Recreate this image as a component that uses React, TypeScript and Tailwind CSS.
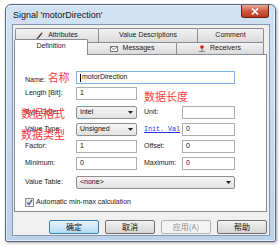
import React from "react";

const ui = "font-['Liberation_Sans','Noto_Sans_CJK_SC',sans-serif]";
const cjk = "font-['Noto_Sans_CJK_SC',sans-serif]";

function PencilIcon() {
  return (
    <svg width="7" height="8" viewBox="0 0 7 8">
      <path d="M1 7 L6 1" stroke="#3a3a3a" strokeWidth="1.2" />
      <path d="M5 1 L6.5 0.5 L6 2" fill="#d02020" />
      <path d="M0.5 7.5 L2 7" stroke="#2f9a2f" strokeWidth="1" />
    </svg>
  );
}

function MailIcon() {
  return (
    <svg width="8" height="6" viewBox="0 0 8 6">
      <rect x="0.5" y="0.5" width="7" height="5" fill="#fff" stroke="#7a7a7a" />
      <path d="M0.5 0.5 L4 3.5 L7.5 0.5" fill="none" stroke="#7a7a7a" />
    </svg>
  );
}

function PinIcon() {
  return (
    <svg width="6" height="7" viewBox="0 0 6 7">
      <rect x="1.5" y="0.5" width="3" height="3" fill="#e01010" />
      <path d="M0 6.5 H6" stroke="#888" />
      <path d="M3 3.5 V6" stroke="#666" />
    </svg>
  );
}

function Arrow() {
  return (
    <svg width="5" height="3" viewBox="0 0 5 3" className="shrink-0">
      <path d="M0 0 H5 L2.5 3 Z" fill="#222" />
    </svg>
  );
}

function TextBox({ value, w, focused }: { value?: string; w: string; focused?: boolean }) {
  return (
    <div
      className={`${w} h-[13px] shrink-0 bg-white border ${
        focused ? "border-[#7eb4ea]" : "border-[#abadb3]"
      } flex items-center pl-[3px] text-[7px] text-[#111]`}
    >
      {focused && <span className="w-px h-[8px] bg-black mr-px" />}
      {value}
    </div>
  );
}

function Select({ value, w }: { value: string; w: string }) {
  return (
    <div
      className={`${w} h-[13px] shrink-0 rounded-[2px] border border-[#8e8f8f] bg-linear-to-b from-[#f5f5f5] to-[#e2e2e2] flex items-center justify-between pl-[3px] pr-[3px] text-[7px] text-[#111]`}
    >
      <span>{value}</span>
      <Arrow />
    </div>
  );
}

function Label({ children, w = "w-[51px]" }: { children: React.ReactNode; w?: string }) {
  return <div className={`${w} shrink-0 text-[7px] text-[#1a1a1a] relative whitespace-nowrap`}>{children}</div>;
}

function Tab({ w, children, className = "" }: { w: string; children: React.ReactNode; className?: string }) {
  return (
    <div
      className={`${w} h-full border border-b-0 border-[#898c95] rounded-t-[2px] bg-linear-to-b from-[#f3f3f3] to-[#dadada] flex items-center justify-center gap-[5px] text-[7px] text-[#1a1a1a] ${className}`}
    >
      {children}
    </div>
  );
}

function Button({ children, kind = "normal" }: { children: React.ReactNode; kind?: "normal" | "default" | "disabled" }) {
  const style =
    kind === "default"
      ? "border-[#3c7fb1] bg-linear-to-b from-[#eaf6fd] to-[#b2dcf4] text-[#111]"
      : kind === "disabled"
        ? "border-[#adb2b5] bg-[#f4f4f4] text-[#8a8a8a]"
        : "border-[#707070] bg-linear-to-b from-[#f2f2f2] to-[#d4d4d4] text-[#111]";
  return (
    <div className={`w-[50px] h-[14px] rounded-[2px] border ${style} flex items-center justify-center text-[8px] ${cjk}`}>
      {children}
    </div>
  );
}

export default function App() {
  return (
    <div className={`w-[279px] h-[246px] bg-white pt-[4px] pl-[5px] ${ui}`}>
      <div className="w-[271px] h-[238px] rounded-t-[6px] rounded-b-[2px] border border-[#56677f] bg-linear-to-b from-[#d2e2f4] to-[#bcd1ea] shadow-[inset_0_0_0_1px_rgba(255,255,255,0.55),1px_1px_3px_rgba(0,0,0,0.35)] flex flex-col">
        {/* title bar */}
        <div className="h-[19px] flex items-start justify-between shrink-0">
          <span className="text-[9px] leading-none text-[#111] ml-[7px] mt-[6px]">Signal 'motorDirection'</span>
          <div className="w-[28px] h-[13px] mr-[6px] rounded-b-[3px] border border-t-0 border-[#6b1f14] bg-linear-to-b from-[#e9a898] via-[#cf5a42] to-[#c2391f] flex items-center justify-center">
            <svg width="8" height="7" viewBox="0 0 8 7">
              <path d="M1 0.5 L7 6.5 M7 0.5 L1 6.5" stroke="#fff" strokeWidth="1.6" />
            </svg>
          </div>
        </div>

        {/* client area */}
        <div className="ml-[6px] mr-[5px] mb-[5px] flex-1 bg-[#f0f0f0] border border-[#8396ae] flex flex-col pt-[3px] pl-[1px]">
          {/* tab rows */}
          <div className="h-[14px] flex ml-[1px]">
            <Tab w="w-[84px]">
              <PencilIcon />
              <span>Attributes</span>
            </Tab>
            <Tab w="w-[100px]" className="-ml-px">
              <span>Value Descriptions</span>
            </Tab>
            <Tab w="w-[67px]" className="-ml-px">
              <span>Comment</span>
            </Tab>
          </div>
          <div className="h-[12px] flex items-end">
            <div className="w-[74px] h-[16px] -mb-px relative z-10 border border-b-0 border-[#898c95] rounded-t-[2px] bg-white flex items-center justify-center text-[7px] text-[#1a1a1a] pb-[2px]">
              Definition
            </div>
            <Tab w="w-[90px]" className="-ml-px">
              <MailIcon />
              <span>Messages</span>
            </Tab>
            <Tab w="w-[88px]" className="-ml-px">
              <PinIcon />
              <span>Receivers</span>
            </Tab>
          </div>

          {/* panel */}
          <div className="w-[253px] h-[158px] border border-[#898c95] bg-white flex flex-col pt-[16px] pl-[10px]">
            <div className="flex items-center h-[13px]">
              <Label>
                Name:<span className={`text-[11px] text-[#ff3b3b] ml-[2px] ${cjk}`}>名称</span>
              </Label>
              <TextBox w="w-[159px]" value="motorDirection" focused />
            </div>

            <div className="flex items-center h-[13px] mt-[3px]">
              <Label>Length [Bit]:</Label>
              <TextBox w="w-[61px]" value="1" />
              <span className={`ml-[7px] text-[11px] text-[#ff3b3b] relative top-[3px] ${cjk}`}>数据长度</span>
            </div>

            <div className="flex items-center h-[13px] mt-[6px]">
              <Label>
                Byte Order:
                <span className={`absolute -left-[4px] -top-[2px] text-[11px] leading-[16px] text-[#ff3b3b] ${cjk}`}>数据格式</span>
              </Label>
              <Select w="w-[61px]" value="Intel" />
              <div className="ml-[7px] flex items-center">
                <Label w="w-[38px]">Unit:</Label>
                <TextBox w="w-[53px]" />
              </div>
            </div>

            <div className="flex items-center h-[13px] mt-[4px]">
              <Label>
                Value Type:
                <span className={`absolute -left-[4px] top-[2px] text-[11px] leading-[16px] text-[#ff3b3b] ${cjk}`}>数据类型</span>
              </Label>
              <Select w="w-[61px]" value="Unsigned" />
              <div className="ml-[7px] flex items-center">
                <div className="w-[37px] mr-px shrink-0 overflow-hidden whitespace-nowrap text-[6.7px] text-[#2233dd] underline font-['Liberation_Mono',monospace]">
                  Init. Val
                </div>
                <TextBox w="w-[53px]" value="0" />
              </div>
            </div>

            <div className="flex items-center h-[13px] mt-[4px]">
              <Label>Factor:</Label>
              <TextBox w="w-[61px]" value="1" />
              <div className="ml-[7px] flex items-center">
                <Label w="w-[38px]">Offset:</Label>
                <TextBox w="w-[53px]" value="0" />
              </div>
            </div>

            <div className="flex items-center h-[13px] mt-[4px]">
              <Label>Minimum:</Label>
              <TextBox w="w-[61px]" value="0" />
              <div className="ml-[7px] flex items-center">
                <Label w="w-[38px]">Maximum:</Label>
                <TextBox w="w-[53px]" value="0" />
              </div>
            </div>

            <div className="flex items-center h-[13px] mt-[6px]">
              <Label>Value Table:</Label>
              <Select w="w-[159px]" value="<none>" />
            </div>

            <div className="flex items-center h-[10px] mt-[8px] gap-[2px]">
              <div className="w-[9px] h-[9px] border border-[#8e8f8f] bg-linear-to-br from-[#dcdcdc] to-[#fbfbfb] flex items-center justify-center">
                <svg width="7" height="7" viewBox="0 0 7 7">
                  <path d="M1 3.5 L3 5.5 L6 1" fill="none" stroke="#4a5f97" strokeWidth="1.4" />
                </svg>
              </div>
              <span className="text-[7px] text-[#1a1a1a]">Automatic min-max calculation</span>
            </div>
          </div>

          {/* buttons */}
          <div className="flex justify-end gap-[6px] mt-[8px] pr-[2px]">
            <Button kind="default">确定</Button>
            <Button>取消</Button>
            <Button kind="disabled">应用(A)</Button>
            <Button>帮助</Button>
          </div>
        </div>
      </div>
    </div>
  );
}
